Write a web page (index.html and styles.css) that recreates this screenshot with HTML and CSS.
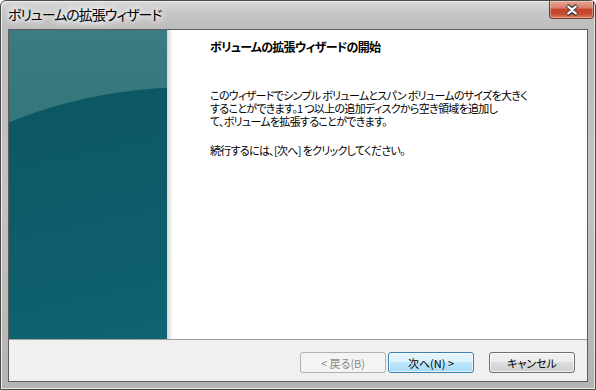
FILE: index.html
```html
<!DOCTYPE html>
<html lang="ja">
<head>
<meta charset="utf-8">
<title>ボリュームの拡張ウィザード</title>
<link rel="stylesheet" href="styles.css">
</head>
<body>
<div class="window">
  <div class="titlebar">
    <span class="title">ボリュームの拡張ウィザード</span>
    <div class="close">
      <svg width="18" height="12" viewBox="0 0 18 12">
        <path d="M4 1.5 L9 5 L14 1.5 M4 10.5 L9 7 L14 10.5" fill="none" stroke="#3a3a3a" stroke-width="4" stroke-linejoin="round"/>
        <path d="M4.5 2 L9 5.6 L13.5 2 M4.5 10 L9 6.4 L13.5 10" fill="none" stroke="#ffffff" stroke-width="2.2" stroke-linejoin="round"/>
      </svg>
    </div>
  </div>
  <div class="client">
    <div class="main">
      <div class="banner">
        <svg width="158" height="309" viewBox="0 0 158 309">
          <defs>
            <linearGradient id="top" x1="0" y1="0" x2="0" y2="1">
              <stop offset="0" stop-color="#3b7b81"/>
              <stop offset="1" stop-color="#276a73"/>
            </linearGradient>
            <linearGradient id="low" x1="0" y1="0" x2="0.3" y2="1">
              <stop offset="0" stop-color="#0c5461"/>
              <stop offset="0.5" stop-color="#0f6170"/>
              <stop offset="1" stop-color="#127686"/>
            </linearGradient>
          </defs>
          <rect width="158" height="309" fill="url(#top)"/>
          <ellipse cx="185" cy="321" rx="370" ry="264" fill="url(#low)"/>
        </svg>
      </div>
      <div class="shade"></div>
      <div class="content">
        <h1 class="heading">ボリュームの拡張ウィザードの開始</h1>
        <p class="para">このウィザードでシンプル ボリュームとスパン ボリュームのサイズを大きく<br>することができます。1 つ以上の追加ディスクから空き領域を追加し<br>て、ボリュームを拡張することができます。</p>
        <p class="para">続行するには、[次へ] をクリックしてください。</p>
      </div>
    </div>
    <div class="footer">
      <button class="btn btn-disabled" disabled>&lt; 戻る(B)</button>
      <button class="btn btn-default">次へ(N) &gt;</button>
      <button class="btn btn-cancel">キャンセル</button>
    </div>
  </div>
</div>
</body>
</html>
```
FILE: styles.css
```css
html, body {
  margin: 0;
  padding: 0;
  background: #ffffff;
}
body {
  width: 596px;
  height: 390px;
  overflow: hidden;
  font-family: "Noto Sans CJK JP", "Noto Sans", sans-serif;
}
.window {
  box-sizing: border-box;
  width: 596px;
  height: 390px;
  padding: 0 7px 7px 7px;
  border: 1px solid #4a4a4a;
  border-radius: 6px 6px 0 0;
  background: linear-gradient(180deg, #d9d9d9 0px, #c6c6c6 12px, #bdbdbd 28px, #c2c2c2 200px, #b4b4b4 390px);
  box-shadow: inset 1px 1px 0 #eeeeee, inset -1px -1px 0 #e6e6e6;
  display: flex;
  flex-direction: column;
}
.titlebar {
  height: 28px;
  display: flex;
  align-items: flex-start;
  justify-content: space-between;
}
.title {
  margin-top: 4px;
  font-size: 14px;
  line-height: 18px;
  letter-spacing: -1px;
  color: #000000;
  font-feature-settings: "palt";
  text-shadow: 0 0 6px #ffffff, 0 0 8px #ffffff, 0 0 10px #ffffff;
}
.close {
  width: 45px;
  height: 18px;
  margin-right: -6px;
  box-sizing: border-box;
  border: 1px solid #6b3a30;
  border-top: none;
  border-radius: 0 0 4px 4px;
  background: linear-gradient(180deg, #e8a593 0%, #d98069 40%, #c4452c 50%, #c74a30 75%, #dd7a56 100%);
  box-shadow: inset 0 0 0 1px rgba(255,255,255,0.35);
  display: flex;
  align-items: center;
  justify-content: center;
}
.close svg {
  display: block;
}
.client {
  flex: 1;
  border: 1px solid #5c5c5c;
  background: #f0f0f0;
  display: flex;
  flex-direction: column;
}
.main {
  height: 309px;
  display: flex;
  background: #ffffff;
  border-bottom: 1px solid #a0a0a0;
}
.banner {
  width: 158px;
  height: 309px;
}
.banner svg {
  display: block;
}
.shade {
  width: 6px;
  background: linear-gradient(90deg, #d6d6d6, #ececec 50%, #ffffff);
}
.content {
  flex: 1;
  padding: 10px 0 0 37px;
}
.heading {
  margin: 0;
  font-size: 12px;
  line-height: 14px;
  letter-spacing: -0.7px;
  font-weight: bold;
  font-feature-settings: "palt";
  color: #000000;
}
.para {
  margin: 35px 0 0 0;
  font-size: 11px;
  line-height: 13px;
  letter-spacing: -0.7px;
  font-feature-settings: "palt";
  color: #000000;
}
.para + .para {
  margin-top: 16px;
}
.footer {
  flex: 1;
  display: flex;
  align-items: flex-start;
  padding: 12px 12px 0 0;
  justify-content: flex-end;
}
.btn {
  box-sizing: border-box;
  width: 86px;
  height: 21px;
  padding: 0;
  font-family: "Noto Sans CJK JP", "Noto Sans", sans-serif;
  font-size: 11px;
  line-height: 18px;
  font-feature-settings: "palt";
  color: #000000;
  border: 1px solid #707070;
  border-radius: 3px;
  background: linear-gradient(180deg, #f2f2f2 0%, #ebebeb 49%, #dddddd 50%, #cfcfcf 100%);
  box-shadow: inset 0 0 0 1px rgba(255,255,255,0.7);
}
.btn-disabled {
  color: #8a8a8a;
  border-color: #adb2b5;
  background: #f4f4f4;
  box-shadow: none;
}
.btn-default {
  margin-left: 2px;
  border-color: #3c7fb1;
  background: linear-gradient(180deg, #eaf6fd 0%, #d9f0fc 49%, #bee6fd 50%, #a7d9f5 100%);
}
.btn-cancel {
  margin-left: 15px;
}
```
